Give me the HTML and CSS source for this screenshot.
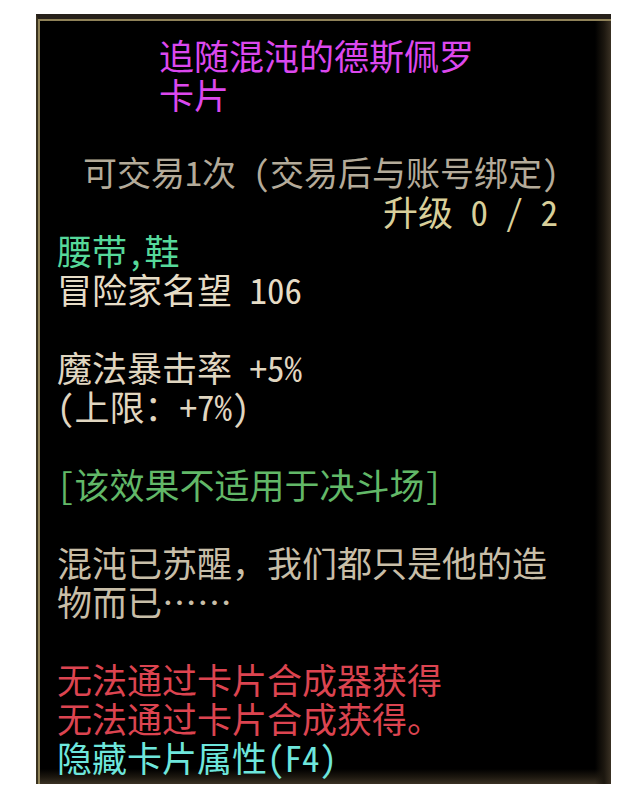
FILE: index.html
```html
<!DOCTYPE html>
<html lang="zh-CN">
<head>
<meta charset="utf-8">
<title>追随混沌的德斯佩罗卡片</title>
<link rel="stylesheet" href="styles.css">
</head>
<body>
<div class="tooltip">
  <div class="sec">
    <div class="title">追随混沌的德斯佩罗<br>卡片</div>
  </div>
  <div class="sec">
    <div class="line trade">可交易1次 (交易后与账号绑定)</div>
    <div class="line upgrade">升级 0 / 2</div>
    <div class="line slots">腰带，鞋</div>
    <div class="line fame">冒险家名望 106</div>
  </div>
  <div class="sec">
    <div class="line stat">魔法暴击率 +5%</div>
    <div class="line stat">(上限：+7%)</div>
  </div>
  <div class="sec">
    <div class="line note">[该效果不适用于决斗场]</div>
  </div>
  <div class="sec">
    <div class="line flavor">混沌已苏醒，我们都只是他的造<br>物而已……</div>
  </div>
  <div class="sec">
    <div class="line red">无法通过卡片合成器获得</div>
    <div class="line red">无法通过卡片合成获得。</div>
    <div class="line cyan">隐藏卡片属性(F4)</div>
  </div>
</div>
</body>
</html>
```
FILE: styles.css
```css
html, body {
  margin: 0;
  padding: 0;
  background: #ffffff;
}

.tooltip {
  box-sizing: border-box;
  width: 575px;
  height: 770px;
  margin: 14px 0 0 36px;
  padding: 16px 26px 0 19px;
  background:
    linear-gradient(to left, #3a3124 0, #1c170f 7px, rgba(0,0,0,0) 16px),
    linear-gradient(to top, #3a3124 0, #1c170f 7px, rgba(0,0,0,0) 15px),
    #000000;
  border-left: 2px solid #3a321f;
  border-top: 5px solid #26201a;
  box-shadow: inset 2px 2px 0 #8f8258;
  font-family: "Noto Sans CJK SC", "Noto Sans", sans-serif;
  font-feature-settings: "hwid" 1;
  font-size: 35px;
  line-height: 39px;
  color: #e0d6c0;
  display: flex;
  flex-direction: column;
  gap: 39px;
}

.title {
  width: 324px;
  margin: 0 auto;
  color: #dc48ee;
}

.line {
  white-space: nowrap;
}

.trade {
  color: #b4ab9a;
  font-size: 34px;
  text-align: center;
}

.upgrade {
  color: #d8cf9a;
  text-align: right;
  padding-right: 27px;
}

.slots {
  color: #56d89a;
}

.fame {
  color: #e6dcc6;
}

.stat {
  color: #e0d6c0;
}

.note {
  color: #62b868;
}

.flavor {
  color: #c8bea8;
  font-feature-settings: normal;
}

.red {
  color: #dc4450;
}

.cyan {
  color: #6ee6dc;
}
```
